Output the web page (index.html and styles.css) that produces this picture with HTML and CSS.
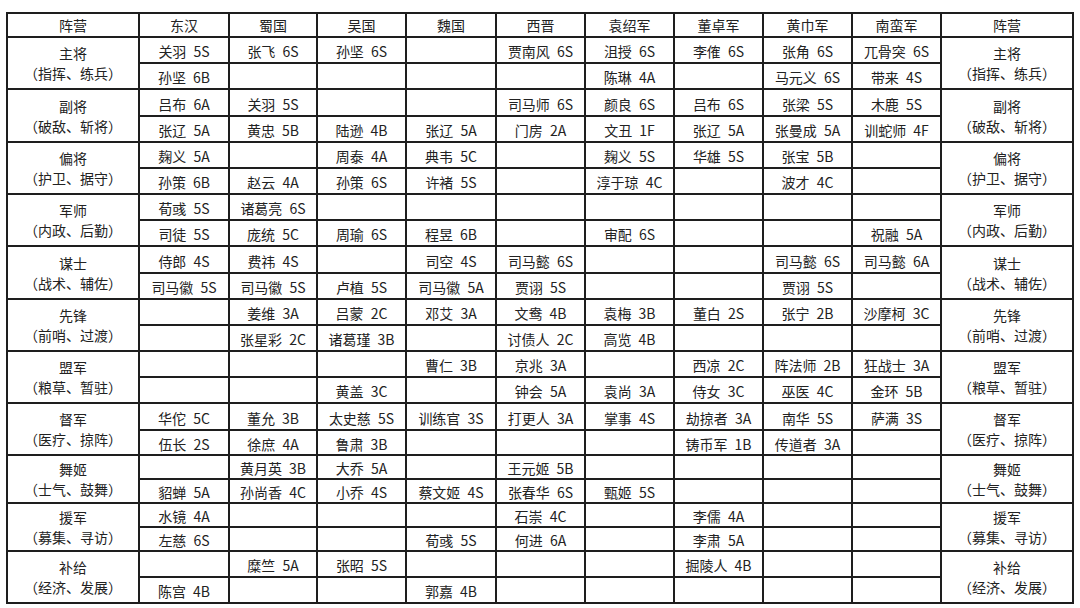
FILE: index.html
```html
<!DOCTYPE html>
<html lang="zh-CN">
<head>
<meta charset="utf-8">
<title>阵营</title>
<link rel="stylesheet" href="styles.css">
</head>
<body>
<div class="grid">
  <div class="c h">阵营</div><div class="c h">东汉</div><div class="c h">蜀国</div><div class="c h">吴国</div><div class="c h">魏国</div><div class="c h">西晋</div><div class="c h">袁绍军</div><div class="c h">董卓军</div><div class="c h">黄巾军</div><div class="c h">南蛮军</div><div class="c h">阵营</div>

  <div class="c cat">主将<br>（指挥、练兵）</div>
  <div class="c">关羽 5S</div><div class="c">张飞 6S</div><div class="c">孙坚 6S</div><div class="c"></div><div class="c">贾南风 6S</div><div class="c">沮授 6S</div><div class="c">李傕 6S</div><div class="c">张角 6S</div><div class="c">兀骨突 6S</div>
  <div class="c cat">主将<br>（指挥、练兵）</div>
  <div class="c">孙坚 6B</div><div class="c"></div><div class="c"></div><div class="c"></div><div class="c"></div><div class="c">陈琳 4A</div><div class="c"></div><div class="c">马元义 6S</div><div class="c">带来 4S</div>

  <div class="c cat">副将<br>（破敌、斩将）</div>
  <div class="c">吕布 6A</div><div class="c">关羽 5S</div><div class="c"></div><div class="c"></div><div class="c">司马师 6S</div><div class="c">颜良 6S</div><div class="c">吕布 6S</div><div class="c">张梁 5S</div><div class="c">木鹿 5S</div>
  <div class="c cat">副将<br>（破敌、斩将）</div>
  <div class="c">张辽 5A</div><div class="c">黄忠 5B</div><div class="c">陆逊 4B</div><div class="c">张辽 5A</div><div class="c">门房 2A</div><div class="c">文丑 1F</div><div class="c">张辽 5A</div><div class="c">张曼成 5A</div><div class="c">训蛇师 4F</div>

  <div class="c cat">偏将<br>（护卫、据守）</div>
  <div class="c">麹义 5A</div><div class="c"></div><div class="c">周泰 4A</div><div class="c">典韦 5C</div><div class="c"></div><div class="c">麹义 5S</div><div class="c">华雄 5S</div><div class="c">张宝 5B</div><div class="c"></div>
  <div class="c cat">偏将<br>（护卫、据守）</div>
  <div class="c">孙策 6B</div><div class="c">赵云 4A</div><div class="c">孙策 6S</div><div class="c">许褚 5S</div><div class="c"></div><div class="c">淳于琼 4C</div><div class="c"></div><div class="c">波才 4C</div><div class="c"></div>

  <div class="c cat">军师<br>（内政、后勤）</div>
  <div class="c">荀彧 5S</div><div class="c">诸葛亮 6S</div><div class="c"></div><div class="c"></div><div class="c"></div><div class="c"></div><div class="c"></div><div class="c"></div><div class="c"></div>
  <div class="c cat">军师<br>（内政、后勤）</div>
  <div class="c">司徒 5S</div><div class="c">庞统 5C</div><div class="c">周瑜 6S</div><div class="c">程昱 6B</div><div class="c"></div><div class="c">审配 6S</div><div class="c"></div><div class="c"></div><div class="c">祝融 5A</div>

  <div class="c cat">谋士<br>（战术、辅佐）</div>
  <div class="c">侍郎 4S</div><div class="c">费祎 4S</div><div class="c"></div><div class="c">司空 4S</div><div class="c">司马懿 6S</div><div class="c"></div><div class="c"></div><div class="c">司马懿 6S</div><div class="c">司马懿 6A</div>
  <div class="c cat">谋士<br>（战术、辅佐）</div>
  <div class="c">司马徽 5S</div><div class="c">司马徽 5S</div><div class="c">卢植 5S</div><div class="c">司马徽 5A</div><div class="c">贾诩 5S</div><div class="c"></div><div class="c"></div><div class="c">贾诩 5S</div><div class="c"></div>

  <div class="c cat">先锋<br>（前哨、过渡）</div>
  <div class="c"></div><div class="c">姜维 3A</div><div class="c">吕蒙 2C</div><div class="c">邓艾 3A</div><div class="c">文鸯 4B</div><div class="c">袁梅 3B</div><div class="c">董白 2S</div><div class="c">张宁 2B</div><div class="c">沙摩柯 3C</div>
  <div class="c cat">先锋<br>（前哨、过渡）</div>
  <div class="c"></div><div class="c">张星彩 2C</div><div class="c">诸葛瑾 3B</div><div class="c"></div><div class="c">讨债人 2C</div><div class="c">高览 4B</div><div class="c"></div><div class="c"></div><div class="c"></div>

  <div class="c cat">盟军<br>（粮草、暂驻）</div>
  <div class="c"></div><div class="c"></div><div class="c"></div><div class="c">曹仁 3B</div><div class="c">京兆 3A</div><div class="c"></div><div class="c">西凉 2C</div><div class="c">阵法师 2B</div><div class="c">狂战士 3A</div>
  <div class="c cat">盟军<br>（粮草、暂驻）</div>
  <div class="c"></div><div class="c"></div><div class="c">黄盖 3C</div><div class="c"></div><div class="c">钟会 5A</div><div class="c">袁尚 3A</div><div class="c">侍女 3C</div><div class="c">巫医 4C</div><div class="c">金环 5B</div>

  <div class="c cat">督军<br>（医疗、掠阵）</div>
  <div class="c">华佗 5C</div><div class="c">董允 3B</div><div class="c">太史慈 5S</div><div class="c">训练官 3S</div><div class="c">打更人 3A</div><div class="c">掌事 4S</div><div class="c">劫掠者 3A</div><div class="c">南华 5S</div><div class="c">萨满 3S</div>
  <div class="c cat">督军<br>（医疗、掠阵）</div>
  <div class="c">伍长 2S</div><div class="c">徐庶 4A</div><div class="c">鲁肃 3B</div><div class="c"></div><div class="c"></div><div class="c"></div><div class="c">铸币军 1B</div><div class="c">传道者 3A</div><div class="c"></div>

  <div class="c cat">舞姬<br>（士气、鼓舞）</div>
  <div class="c"></div><div class="c">黄月英 3B</div><div class="c">大乔 5A</div><div class="c"></div><div class="c">王元姬 5B</div><div class="c"></div><div class="c"></div><div class="c"></div><div class="c"></div>
  <div class="c cat">舞姬<br>（士气、鼓舞）</div>
  <div class="c">貂蝉 5A</div><div class="c">孙尚香 4C</div><div class="c">小乔 4S</div><div class="c">蔡文姬 4S</div><div class="c">张春华 6S</div><div class="c">甄姬 5S</div><div class="c"></div><div class="c"></div><div class="c"></div>

  <div class="c cat">援军<br>（募集、寻访）</div>
  <div class="c">水镜 4A</div><div class="c"></div><div class="c"></div><div class="c"></div><div class="c">石崇 4C</div><div class="c"></div><div class="c">李儒 4A</div><div class="c"></div><div class="c"></div>
  <div class="c cat">援军<br>（募集、寻访）</div>
  <div class="c">左慈 6S</div><div class="c"></div><div class="c"></div><div class="c">荀彧 5S</div><div class="c">何进 6A</div><div class="c"></div><div class="c">李肃 5A</div><div class="c"></div><div class="c"></div>

  <div class="c cat">补给<br>（经济、发展）</div>
  <div class="c"></div><div class="c">糜竺 5A</div><div class="c">张昭 5S</div><div class="c"></div><div class="c"></div><div class="c"></div><div class="c">掘陵人 4B</div><div class="c"></div><div class="c"></div>
  <div class="c cat">补给<br>（经济、发展）</div>
  <div class="c">陈宫 4B</div><div class="c"></div><div class="c"></div><div class="c">郭嘉 4B</div><div class="c"></div><div class="c"></div><div class="c"></div><div class="c"></div><div class="c"></div>
</div>
</body>
</html>
```
FILE: styles.css
```css
html, body {
  margin: 0;
  padding: 0;
  background: #ffffff;
}
body {
  padding: 12px 0 0 6px;
  font-family: "Noto Sans CJK SC", "Noto Sans", sans-serif;
}
.grid {
  display: grid;
  width: max-content;
  background: #1e1e1e;
  padding: 2px;
  gap: 2px;
  grid-template-columns: 130px 88px 86px 87px 88px 87px 87px 87px 87px 87px 130px;
  grid-template-rows: 22px
    24px 24px 25px 24px 24px 24px 24px 24px 25px 24px 24px 24px 24px 24px
    25px 23px 22px 22px 22px 22px 24px 24px;
}
.c {
  background: #ffffff;
  display: flex;
  align-items: center;
  justify-content: center;
  font-size: 14px;
  line-height: 16px;
  color: #222222;
  white-space: nowrap;
  word-spacing: 4px;
  padding-top: 2px;
  box-sizing: border-box;
}
.h {
  padding-top: 0;
}
.cat {
  grid-row: span 2;
  text-align: center;
  line-height: 20px;
  word-spacing: 0;
  padding-top: 0;
}
```
